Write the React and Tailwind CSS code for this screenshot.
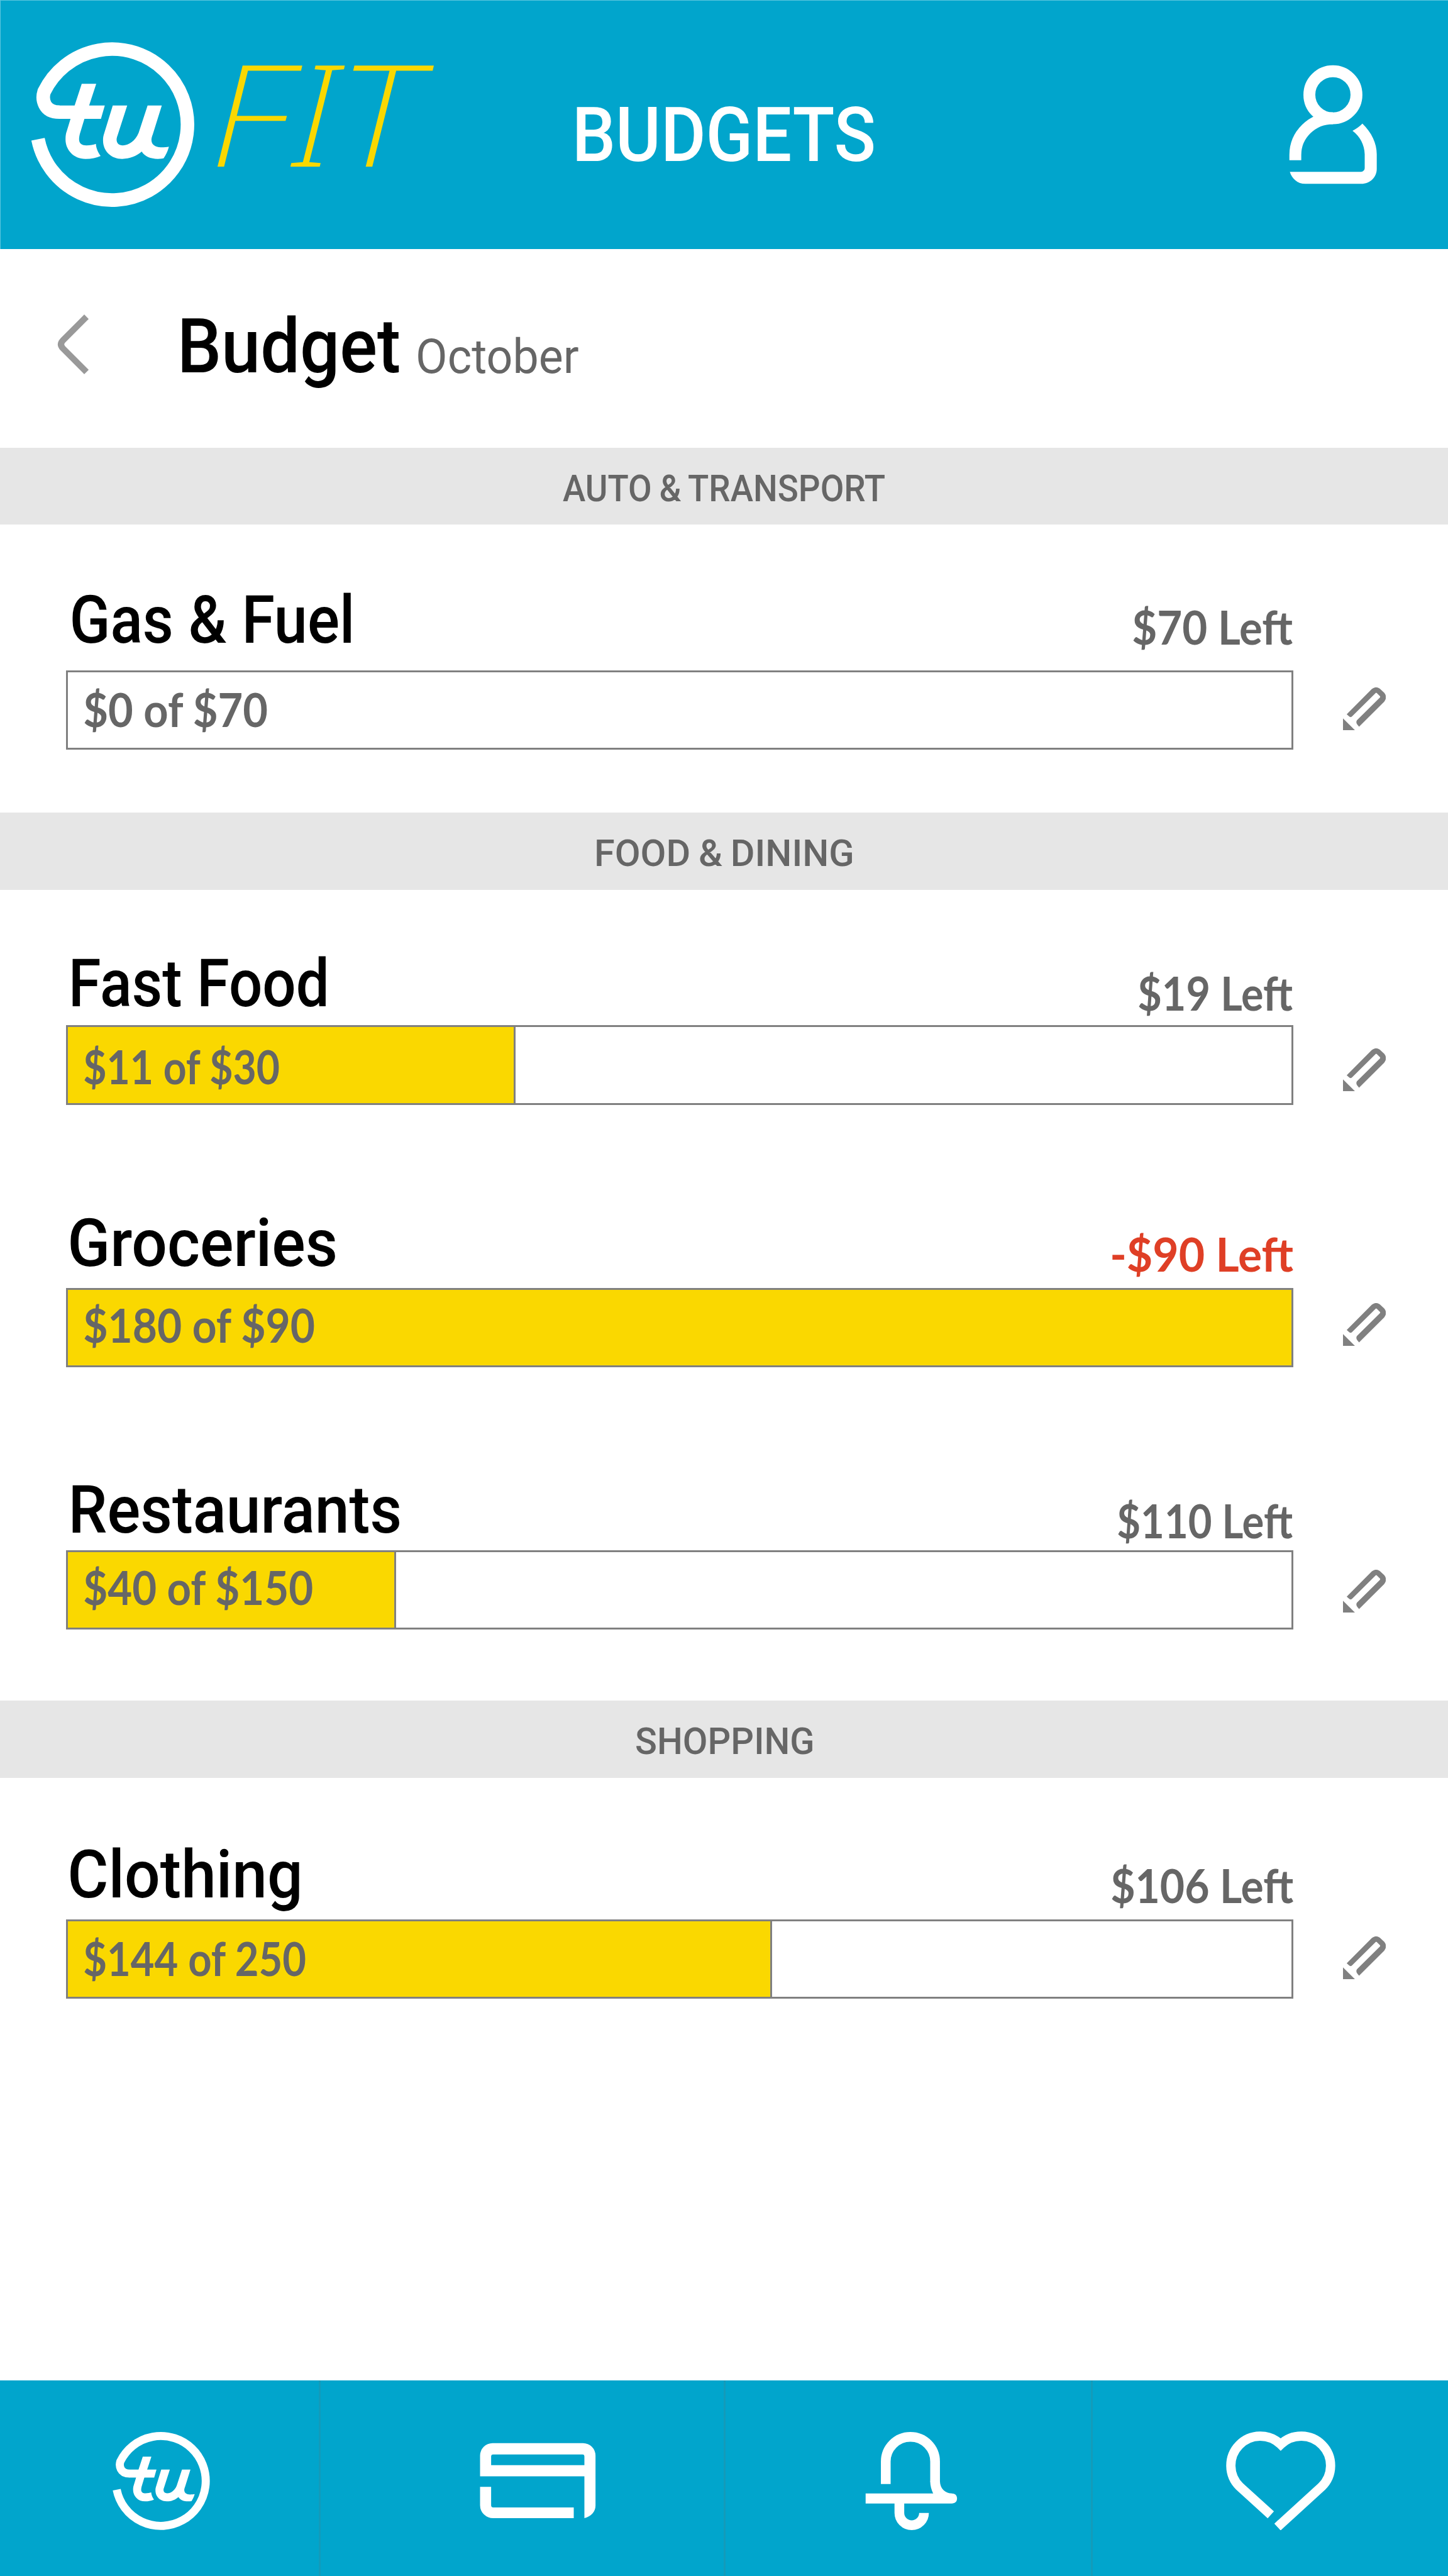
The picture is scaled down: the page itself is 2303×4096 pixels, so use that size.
import React, { useLayoutEffect, useRef, useState } from "react";

// One line of text, condensed or widened so that its ink fills the wrapper's width.
function Fit({ children, className = "" }) {
  const ref = useRef(null);
  const [transform, setTransform] = useState("none");
  useLayoutEffect(() => {
    const el = ref.current;
    const cs = getComputedStyle(el);
    const ctx = document.createElement("canvas").getContext("2d");
    ctx.font = `${cs.fontStyle} ${cs.fontWeight} ${cs.fontSize} ${cs.fontFamily}`;
    if (cs.letterSpacing !== "normal") ctx.letterSpacing = cs.letterSpacing;
    if (cs.wordSpacing !== "normal") ctx.wordSpacing = cs.wordSpacing;
    const m = ctx.measureText(el.textContent);
    const left = -m.actualBoundingBoxLeft;
    const ink = m.actualBoundingBoxRight - left;
    const s = el.parentElement.clientWidth / ink;
    setTransform(`translateX(${-left * s}px) scaleX(${s})`);
  }, []);
  return (
    <div className={"shrink-0 leading-none " + className}>
      <span ref={ref} className="block w-max origin-left whitespace-nowrap" style={{ transform }}>
        {children}
      </span>
    </div>
  );
}

function Logo({ className }) {
  return (
    <svg viewBox="62 86 362 366" className={"shrink-0 " + className} fill="white">
      <path
        d="M81.6 299.7 A162.9 162.9 0 1 0 94.8 197 C90 212 93 241.2 128 241.2"
        fill="none"
        stroke="white"
        strokeWidth="29.3"
      />
      <path d="M127 226.8H225.8L217.5 255.7H127Z" />
      <path d="M176 180H207.3L192 226.8L181.8 255.7L172 288C170.5 294 170.3 298 170.3 300C170.3 309 177 312.9 186 312.9C194 312.9 202 311.5 206.6 309.6C207 319 211.5 329 216.8 335.7C208 340 197 342.1 184.3 342.1C158 342.1 141 322 141 300C141 292 142 287 143.5 283L151.8 255.7L160.7 226.8Z" />
      <path d="M243 226.8H274.2L253.5 291C252 295 251.3 298 251.3 300.5C251.3 308 256 312.9 264.7 312.9C278 312.9 292 303 299 285.7L318.2 226.8H348.9L329.5 289C327.5 294 326.5 298 326.5 301C326.5 311 334 317.3 348 317.3C354 317.3 360 316.8 364.2 315.8C362 325 357 335 352.7 341C349 342 345 342.1 340.6 342.1C324 342.1 312 337 305.5 326.4C293 336.5 280 342.1 263.4 342.1C240 342.1 222 326 222 301.8C222 295 223 292 224.5 287Z" />
    </svg>
  );
}

function PersonIcon({ className }) {
  return (
    <svg viewBox="245 177 580 780" className={"shrink-0 " + className}>
      <g fill="none" stroke="white" strokeWidth="77">
        <circle cx="534" cy="375" r="152.5" />
        <path d="M290.5 799V765A243.5 238 0 0 1 534 527" />
      </g>
      <path
        fill="white"
        d="M725 562C785 620 818 690 818 760V856C818 910 774 952 718 952H355C305 952 268 918 255 874H716C730 874 740 863 740 849V760C738 700 710 645 661 609C685 597 708 580 725 562Z"
      />
    </svg>
  );
}

function CardIcon({ className }) {
  return (
    <svg viewBox="1035 5272 251 164" className={"shrink-0 " + className} fill="white">
      <path
        fillRule="evenodd"
        d="M1062.7 5273H1258A27 27 0 0 1 1285 5300V5408C1285 5420 1276 5431 1261 5435V5344.7H1035.7V5300A27 27 0 0 1 1062.7 5273ZM1059.6 5320.7H1261V5302Q1261 5297.3 1257 5297.3H1064Q1059.6 5297.3 1059.6 5302Z"
      />
      <path d="M1035.7 5367.3H1059.6V5407Q1059.6 5411.7 1064 5411.7H1238V5435H1064A28 28 0 0 1 1035.7 5407Z" />
    </svg>
  );
}

function BellIcon({ className }) {
  return (
    <svg viewBox="1867 5247 200 214" className={"shrink-0 " + className} fill="white">
      <g fill="none" stroke="white" strokeWidth="21">
        <path d="M1911.5 5360.7V5312A53.2 53.2 0 0 1 2018 5312V5356" />
        <path d="M1940.9 5400V5423A26.6 26.6 0 0 0 1994.1 5423" />
      </g>
      <path d="M2007.5 5355H2028.5C2029 5370 2039 5381 2055 5381.5H2014C2010 5373 2007.5 5364 2007.5 5355Z" />
      <path d="M1868 5381H2054C2061 5381 2065.4 5385 2065.4 5392S2061 5402.7 2054 5402.7H1868Z" />
    </svg>
  );
}

function HeartIcon({ className }) {
  return (
    <svg viewBox="2647 5247 236 214" className={"shrink-0 " + className} fill="none" stroke="white" strokeWidth="20">
      <path d="M2743.6 5427.2L2676.6 5366.4A63.5 63.5 0 0 1 2765 5275.2A63.5 63.5 0 0 1 2853.4 5366.4L2758 5453.4" />
    </svg>
  );
}

function PencilIcon({ className }) {
  return (
    <svg viewBox="0 0 93 93" className={"h-[68.5px] w-[68.5px] shrink-0 " + className} fill="#808080">
      <path d="M0 66.7V92.3H25.7Z" />
      <path d="M8 58L62.3 3.5Q71 -3.5 79.5 2.8L89 11.7Q96.5 21 89 31L34.7 84.7L31 80.5Q27 75 30.4 70.7L79.5 22Q81 20.5 79.8 19L73 12.3Q71.4 11 70.5 12.3L19 63.3Q16.5 65 13.8 63.3Z" />
    </svg>
  );
}

function SectionBar({ children, width }) {
  return (
    <div className="flex h-[122.8px] shrink-0 justify-center bg-[#e6e6e6] pt-[36px]">
      <Fit className={"text-[59.8px] font-medium text-[#666] [word-spacing:-2px] " + width}>{children}</Fit>
    </div>
  );
}

function Budget({ b }) {
  return (
    <div className={b.top}>
      <div className={"flex justify-between pr-[247px] " + b.head}>
        <Fit className={"pt-[2px] text-[105.7px] font-medium text-black " + b.nameW}>{b.name}</Fit>
        <Fit className={"font-['Lato',sans-serif] text-[75.1px] font-bold " + b.leftW}>{b.left}</Fit>
      </div>
      <div className="flex pl-[104.6px]">
        <div className="h-[126.2px] w-[1952.8px] border-[3px] border-[#808080]">
          <div className={"h-full pl-[26px] " + b.fill}>
            <Fit className={"font-['Lato',sans-serif] text-[75.1px] font-bold text-[#666] " + b.spentW}>{b.spent}</Fit>
          </div>
        </div>
        <PencilIcon className={"ml-[78.4px] " + b.pencil} />
      </div>
    </div>
  );
}

const fuel = {
  name: "Gas & Fuel", left: "$70 Left", spent: "$0 of $70",
  top: "pt-[97.6px]", head: "h-[133.6px] pl-[114.9px]",
  nameW: "w-[443px]", leftW: "mt-[26.5px] w-[254.4px] text-[#666]", spentW: "w-[292.3px]",
  fill: "pt-[21px]", pencil: "mt-[26.9px]",
};
const fastFood = {
  name: "Fast Food", left: "$19 Left", spent: "$11 of $30",
  top: "pt-[95px]", head: "h-[120.7px] pl-[114.9px]",
  nameW: "w-[402.5px]", leftW: "mt-[31px] w-[245.3px] text-[#666]", spentW: "w-[311.4px]",
  fill: "w-[712.4px] border-r-[3px] border-[#808080] bg-[#fad800] pt-[24.3px]", pencil: "mt-[36.8px]",
};
const groceries = {
  name: "Groceries", left: "-$90 Left", spent: "$180 of $90",
  top: "pt-[166.4px]", head: "h-[124.9px] pl-[112px]",
  nameW: "w-[421.4px]", leftW: "mt-[33px] w-[287.5px] text-[#df3f26]", spentW: "w-[366.7px]",
  fill: "bg-[#fad800] pt-[18px]", pencil: "mt-[24.3px]",
};
const restaurants = {
  name: "Restaurants", left: "$110 Left", spent: "$40 of $150",
  top: "pt-[172.9px]", head: "h-[117.7px] pl-[114.9px]",
  nameW: "w-[520px]", leftW: "mt-[33.4px] w-[277.7px] text-[#666]", spentW: "w-[363.7px]",
  fill: "w-[522.3px] border-r-[3px] border-[#808080] bg-[#fad800] pt-[18.8px]", pencil: "mt-[31px]",
};
const clothing = {
  name: "Clothing", left: "$106 Left", spent: "$144 of 250",
  top: "pt-[100.9px]", head: "h-[124.4px] pl-[112px]",
  nameW: "w-[363.9px]", leftW: "mt-[32.7px] w-[288.5px] text-[#666]", spentW: "w-[353.4px]",
  fill: "w-[1120.8px] border-r-[3px] border-[#808080] bg-[#fad800] pt-[21px]", pencil: "mt-[27.6px]",
};

export default function App() {
  return (
    <div className="flex h-[4096px] w-[2303px] flex-col overflow-hidden bg-white font-['Roboto',sans-serif]">
      <header className="flex h-[396.3px] shrink-0 items-start bg-[#01a5cc] shadow-[inset_1px_1px_0_#5cc5de]">
        <Logo className="mt-[64.4px] ml-[45.7px] h-[269.6px] w-[266.7px]" />
        <Fit className="mt-[64.7px] ml-[32.4px] w-[346.3px] font-['Noto_Sans',sans-serif] text-[225px] font-[250] text-[#fad800] italic">
          FIT
        </Fit>
        <Fit className="mt-[155px] ml-[226.1px] w-[472.2px] text-[121.2px] font-medium text-white">BUDGETS</Fit>
        <PersonIcon className="mt-[102.4px] ml-[659.9px] h-[191.6px] w-[142.4px]" />
      </header>

      <div className="flex h-[315.4px] shrink-0 items-start">
        <svg viewBox="120 670 80 146" className="mt-[97.3px] ml-[88.4px] h-[107.6px] w-[58.9px] shrink-0" fill="none" stroke="#999" strokeWidth="13.5">
          <path d="M187.3 683L136 734.5Q128.5 742.7 136 751L187.3 802.5" />
        </svg>
        <Fit className="mt-[95.2px] ml-[141.3px] w-[345.7px] text-[121.2px] font-medium text-black">Budget</Fit>
        <Fit className="mt-[133.4px] ml-[31px] w-[254.9px] text-[75.6px] text-[#666]">October</Fit>
      </div>

      <main className="flex grow flex-col">
        <SectionBar width="w-[514px]">AUTO &amp; TRANSPORT</SectionBar>
        <div className="h-[457.4px] shrink-0">
          <Budget b={fuel} />
        </div>
        <SectionBar width="w-[406px]">FOOD &amp; DINING</SectionBar>
        <div className="h-[1289.1px] shrink-0">
          <Budget b={fastFood} />
          <Budget b={groceries} />
          <Budget b={restaurants} />
        </div>
        <SectionBar width="w-[280px]">SHOPPING</SectionBar>
        <Budget b={clothing} />
      </main>

      <nav className="flex h-[310.9px] shrink-0 items-stretch bg-[#01a5cc]">
        <div className="w-[506.6px]">
          <Logo className="mt-[80px] ml-[177.1px] h-[160.6px] w-[158.9px]" />
        </div>
        <div className="w-[644.6px] border-l-[3px] border-[#139bba]">
          <CardIcon className="mt-[98.9px] ml-[253.9px] h-[120.8px] w-[184.9px]" />
        </div>
        <div className="w-[584.3px] border-l-[3px] border-[#139bba]">
          <BellIcon className="mt-[81px] ml-[221.8px] h-[157.7px] w-[147.3px]" />
        </div>
        <div className="grow border-l-[3px] border-[#139bba]">
          <HeartIcon className="mt-[80.5px] ml-[212px] h-[157.7px] w-[173.9px]" />
        </div>
      </nav>
    </div>
  );
}
